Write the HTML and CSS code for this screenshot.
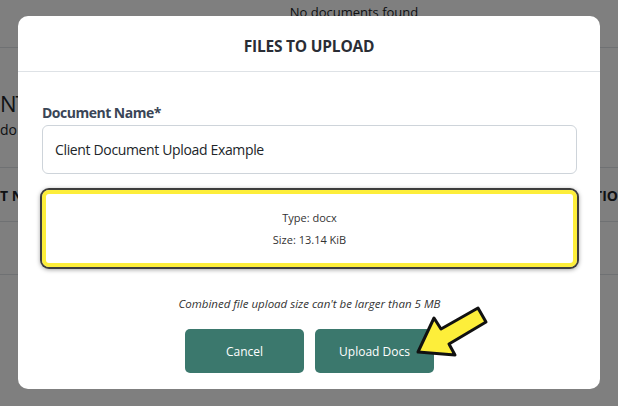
FILE: index.html
```html
<!DOCTYPE html>
<html lang="en">
<head>
<meta charset="utf-8">
<title>Files to upload</title>
<link rel="stylesheet" href="styles.css">
</head>
<body>
<div class="page">
  <div class="empty-row">No documents found</div>
  <div class="section">
    <div class="section-title">NT</div>
    <div class="section-sub">do</div>
  </div>
  <div class="table-head">
    <span class="th-left">T N</span>
    <span class="th-right">TIO</span>
  </div>
  <div class="table-row"></div>
</div>

<div class="overlay">
  <div class="modal">
    <div class="modal-header">FILES TO UPLOAD</div>
    <div class="modal-body">
      <label class="field-label" for="docname">Document Name*</label>
      <input class="field-input" id="docname" type="text" value="Client Document Upload Example">
      <div class="file-card">
        <div class="file-line">Type: docx</div>
        <div class="file-line">Size: 13.14 KiB</div>
      </div>
      <p class="note">Combined file upload size can't be larger than 5 MB</p>
      <div class="actions">
        <button class="btn" type="button">Cancel</button>
        <button class="btn" type="button">Upload Docs</button>
      </div>
    </div>
    <svg class="pointer" width="110" height="70" viewBox="0 0 110 70" aria-hidden="true">
      <polygon points="18,52 34,18 41,29 78,8 86,22 49,44 55,55" fill="#fdee3a" stroke="#111" stroke-width="3" stroke-linejoin="round"/>
    </svg>
  </div>
</div>
</body>
</html>
```

FILE: styles.css
```css
* { box-sizing: border-box; }
html, body { margin: 0; padding: 0; }
body {
  width: 618px;
  height: 406px;
  overflow: hidden;
  background: #fff;
  font-family: "Open Sans", "Noto Sans", sans-serif;
  color: #212529;
  position: relative;
}
.page { width: 618px; }
.empty-row {
  height: 48px;
  border-bottom: 1px solid #dee2e6;
  padding-left: 90px;
  text-align: center;
  font-size: 13px;
  line-height: 24px;
}
.section {
  height: 120px;
  border-bottom: 1px solid #dee2e6;
  display: flex;
  flex-direction: column;
  padding-top: 40px;
}
.section-title { font-size: 22px; line-height: 30px; letter-spacing: -1px; }
.section-sub { font-size: 14px; line-height: 24px; }
.table-head {
  height: 54px;
  border-bottom: 1px solid #dee2e6;
  display: flex;
  justify-content: space-between;
  align-items: center;
  font-weight: 700;
  font-size: 14px;
  padding-top: 2px;
}
.table-row {
  height: 53px;
  border-bottom: 1px solid #dee2e6;
}
.overlay {
  position: absolute;
  inset: 0;
  background: rgba(0, 0, 0, 0.5);
  display: flex;
  justify-content: center;
  align-items: flex-start;
  padding-top: 16px;
}
.modal {
  position: relative;
  width: 582px;
  height: 373px;
  background: #fff;
  border-radius: 10px;
}
.modal-header {
  height: 56px;
  border-bottom: 1px solid #dee2e6;
  display: flex;
  align-items: center;
  justify-content: center;
  font-weight: 700;
  font-size: 15.5px;
  letter-spacing: -0.2px;
  color: #2a2d35;
  padding-top: 4px;
}
.modal-body {
  padding: 31px 23px 16px 24px;
  display: flex;
  flex-direction: column;
}
.field-label {
  font-weight: 700;
  font-size: 14px;
  letter-spacing: -0.5px;
  color: #3a4556;
  line-height: 20px;
  margin-bottom: 2px;
}
.field-input {
  height: 49px;
  width: 100%;
  border: 1px solid #ced4da;
  border-radius: 6px;
  padding: 0 12px;
  font-family: inherit;
  font-size: 14px;
  letter-spacing: -0.35px;
  color: #212529;
  outline: none;
}
.file-card {
  margin-top: 16px;
  height: 77px;
  border: 4px solid #fdee3a;
  border-radius: 7px;
  box-shadow: 0 0 0 2px #3d3d3d, 0 1px 4px 2px rgba(0,0,0,0.35);
  display: flex;
  flex-direction: column;
  align-items: center;
  justify-content: center;
  font-size: 11px;
  line-height: 22px;
  color: #333;
}
.note {
  margin: 27px 0 0;
  text-align: center;
  font-style: italic;
  font-size: 11.5px;
  line-height: 20px;
  color: #333;
}
.actions {
  margin-top: 15px;
  display: flex;
  justify-content: center;
  gap: 11px;
}
.btn {
  width: 119px;
  height: 44px;
  border: none;
  border-radius: 5px;
  background: #3b786d;
  color: #fff;
  font-family: inherit;
  font-size: 12px;
}
.pointer {
  position: absolute;
  left: 382px;
  top: 284px;
}
```
